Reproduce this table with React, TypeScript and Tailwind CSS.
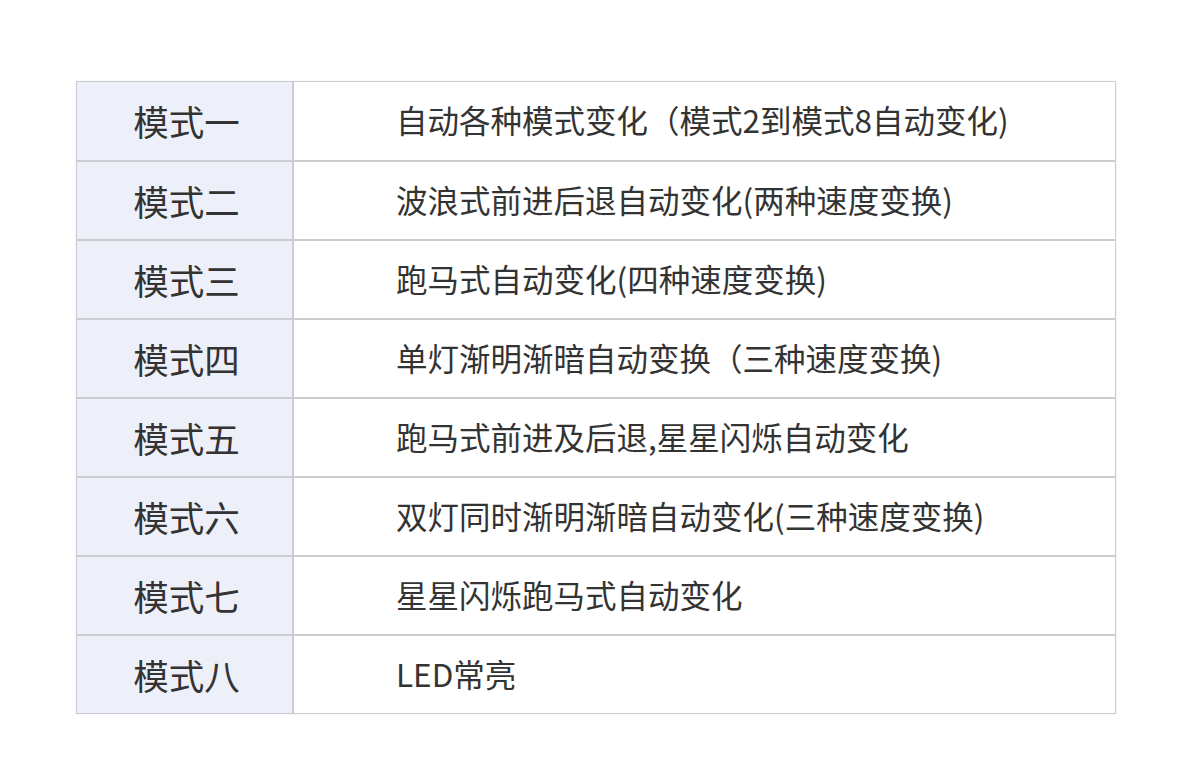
import React from "react";

const rows: [string, string][] = [
  ["模式一", "自动各种模式变化（模式2到模式8自动变化)"],
  ["模式二", "波浪式前进后退自动变化(两种速度变换)"],
  ["模式三", "跑马式自动变化(四种速度变换)"],
  ["模式四", "单灯渐明渐暗自动变换（三种速度变换)"],
  ["模式五", "跑马式前进及后退,星星闪烁自动变化"],
  ["模式六", "双灯同时渐明渐暗自动变化(三种速度变换)"],
  ["模式七", "星星闪烁跑马式自动变化"],
  ["模式八", "LED常亮"],
];

export default function App() {
  return (
    <div
      className="w-[1200px] h-[780px] bg-white overflow-hidden"
      style={{ fontFamily: '"Noto Sans CJK SC", "Noto Sans", sans-serif' }}
    >
      <div className="ml-[76px] mt-[81px] w-[1040px] border border-[#c9cbd0] shadow-[0_0_3px_rgba(0,0,0,0.06)]">
        {rows.map(([k, v], i) => (
          <div
            key={k}
            className={`flex ${i > 0 ? "h-[79px] border-t-2 border-[#caccd1]" : "h-[78px]"}`}
          >
            <div className="w-[217px] shrink-0 bg-[#eef0f9] border-r-2 border-[#caccd1] flex items-center justify-center text-[35.5px] text-[#333333] pl-[4px]">
              {k}
            </div>
            <div className="flex-1 flex items-center pl-[102px] text-[31.5px] text-[#333333] pb-[2px]">
              {v}
            </div>
          </div>
        ))}
      </div>
    </div>
  );
}
